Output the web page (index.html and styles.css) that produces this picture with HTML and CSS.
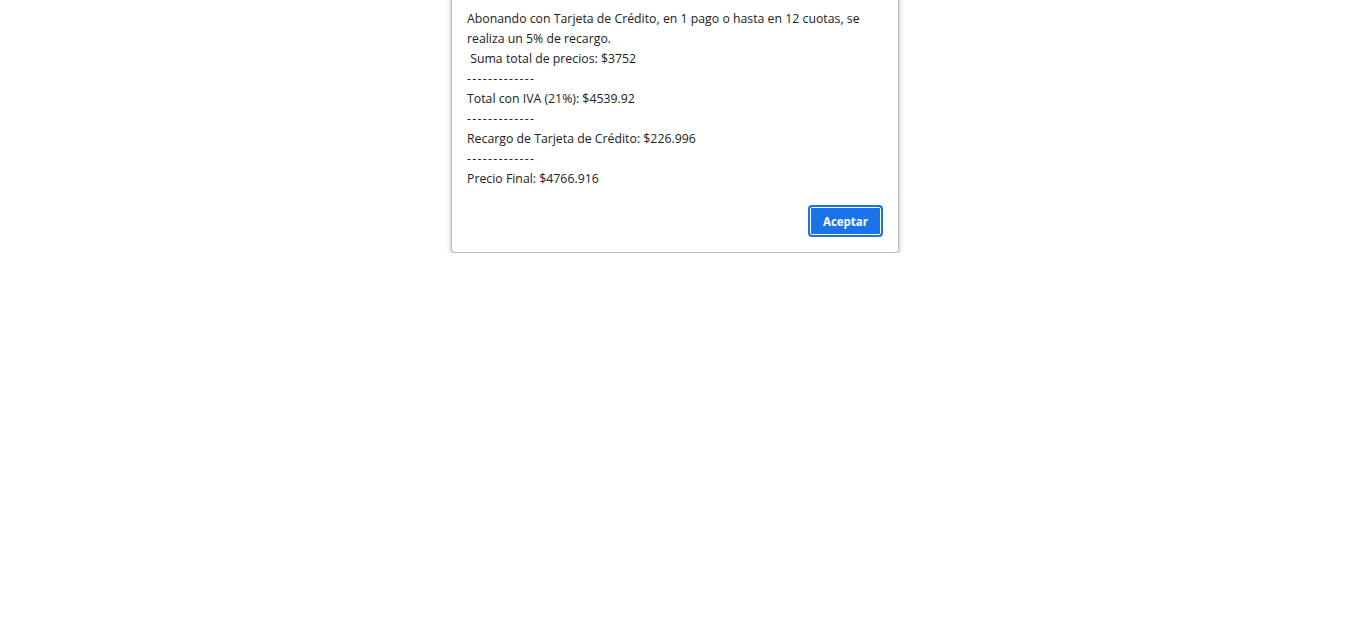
FILE: index.html
```html
<!DOCTYPE html>
<html lang="es">
<head>
<meta charset="utf-8">
<title>Alerta</title>
<link rel="stylesheet" href="styles.css">
</head>
<body>
<div class="dialog">
<div class="message">Abonando con Tarjeta de Crédito, en 1 pago o hasta en 12 cuotas, se realiza un 5% de recargo.
 Suma total de precios: $3752
<span class="sep">-------------</span>
Total con IVA (21%): $4539.92
<span class="sep">-------------</span>
Recargo de Tarjeta de Crédito: $226.996
<span class="sep">-------------</span>
Precio Final: $4766.916</div>
<div class="actions"><button class="btn">Aceptar</button></div>
</div>
</body>
</html>
```
FILE: styles.css
```css
html, body {
  margin: 0;
  padding: 0;
  background: #ffffff;
}
body {
  padding-right: 5px;
  font-family: "Open Sans", "Noto Sans", "DejaVu Sans", sans-serif;
  color: #202124;
}
.dialog {
  width: 416px;
  margin: -20px auto 0;
  padding: 28px 15px 15px 15px;
  background: #fff;
  border: 1px solid #bdbdbd;
  border-radius: 4px;
  box-shadow: 0 2px 5px rgba(0,0,0,0.28);
}
.message {
  font-size: 12.3px;
  line-height: 20px;
  white-space: pre-wrap;
}
.sep {
  letter-spacing: 1.3px;
}
.actions {
  display: flex;
  justify-content: flex-end;
  margin-top: 16px;
}
.btn {
  display: block;
  box-sizing: border-box;
  width: 75px;
  height: 32px;
  margin: 0;
  background: #1a73e8;
  color: #fff;
  font-family: inherit;
  font-size: 11.5px;
  font-weight: 700;
  border: 2px solid #1a73e8;
  border-radius: 4px;
  box-shadow: inset 0 0 0 1px #ffffff;
  padding: 0;
}
```
